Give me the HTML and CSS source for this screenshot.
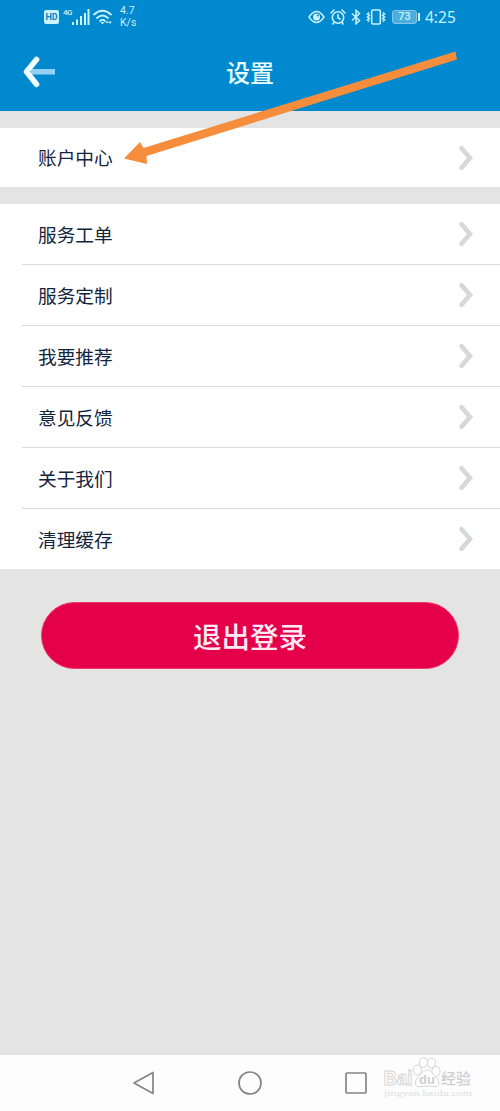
FILE: index.html
```html
<!DOCTYPE html>
<html lang="zh-CN">
<head>
<meta charset="utf-8">
<title>设置</title>
<link rel="stylesheet" href="styles.css">
</head>
<body>
<svg class="defs" width="0" height="0"><defs><symbol id="chevron" viewBox="0 0 17 26"><path d="M3.500 3.300 12 13 3.500 22.700" fill="none" stroke="#d5d8dc" stroke-width="4.600" stroke-linecap="round" stroke-linejoin="miter"/></symbol></defs></svg>
<div class="phone">
  <header class="header">
    <div class="status">
      <div class="status-left">
        <span class="hd">HD</span>
        <span class="network">4G</span>
        <svg class="signal" width="18" height="16" viewBox="0 0 18 16" fill="#c9f2fa"><path d="M0 13h2v3H0zM4 10.500h2V16H4zM8 7h2v9H8zM12 4h2v12h-2zM15.500 0h2v16h-2z"/></svg>
        <svg class="wifi" width="20" height="16" viewBox="0 0 20 16"><g fill="none" stroke="#c9f2fa" stroke-width="1.8" stroke-linecap="round"><path d="M1 5.500Q9.500-2 18 5.500M4 9Q9.500 4 15 9M7 12q2.500-2.200 5 0"/></g><path d="M7.500 13h4l-2 2.500zM12.500 14l1.600-2.300 1.600 2.300zM15.500 12.500h3.200L17.100 15z" fill="#c9f2fa"/></svg>
        <div class="speed"><span>4.7</span><span>K/s</span></div>
      </div>
      <div class="status-right">
        <svg width="17" height="14" viewBox="0 0 17 14"><path d="M1 7Q8.500-4 16 7 8.500 18 1 7Z" fill="none" stroke="#c9f2fa" stroke-width="1.500"/><circle cx="8.500" cy="7" r="3.500" fill="#c9f2fa"/><circle cx="9.800" cy="5.600" r="1" fill="#0787cd"/></svg>
        <svg class="alarm" width="16" height="16" viewBox="0 0 16 16" fill="none" stroke="#c9f2fa" stroke-width="1.600" stroke-linecap="round"><circle cx="8" cy="8.500" r="5.700"/><path d="M1 4 4 1M15 4l-3-3M8 5.500v3.200l2 1.300M4 13.300l-1 1.700M12 13.300l1 1.700"/></svg>
        <svg class="bluetooth" width="10" height="16" viewBox="0 0 10 16" fill="none" stroke="#c9f2fa" stroke-width="1.500"><path d="M1 4.500 8.500 11.500 5 14.700V1.300L8.500 4.500 1 11.500"/></svg>
        <svg class="vibrate" width="20" height="16" viewBox="0 0 20 16" fill="none" stroke="#c9f2fa" stroke-width="1.600"><rect x="5.700" y="1" width="8.600" height="14" rx="1"/><path d="M3.300 3.500 1.500 5l1.800 1.500L1.500 8l1.800 1.500L1.500 11l1.800 1.500M16.700 3.500 18.500 5l-1.800 1.500L18.500 8l-1.800 1.500 1.800 1.500-1.800 1.500"/></svg>
        <span class="battery">73</span><span class="battery-tip"></span>
        <span class="time">4:25</span>
      </div>
    </div>
    <div class="titlebar">
      <svg class="back" width="34" height="32" viewBox="0 0 34 32"><path d="M9 13h24v5.500H9z" fill="#93d0f4"/><path d="M14.500 3.500 4.500 15.700l10 12.500" fill="none" stroke="#f4ffff" stroke-width="5.600" stroke-linecap="round" stroke-linejoin="round"/></svg>
      <h1 class="title">设置</h1>
      <span class="title-spacer"></span>
    </div>
  </header>
  <main class="content">
    <section class="group account"><div class="row"><span class="label">账户中心</span><svg class="chevron"><use href="#chevron"/></svg></div></section>
    <section class="group services">
      <div class="row"><span class="label">服务工单</span><svg class="chevron"><use href="#chevron"/></svg></div>
      <div class="row"><span class="label">服务定制</span><svg class="chevron"><use href="#chevron"/></svg></div>
      <div class="row"><span class="label">我要推荐</span><svg class="chevron"><use href="#chevron"/></svg></div>
      <div class="row"><span class="label">意见反馈</span><svg class="chevron"><use href="#chevron"/></svg></div>
      <div class="row"><span class="label">关于我们</span><svg class="chevron"><use href="#chevron"/></svg></div>
      <div class="row"><span class="label">清理缓存</span><svg class="chevron"><use href="#chevron"/></svg></div>
    </section>
    <button class="logout">退出登录</button>
  </main>
  <nav class="nav">
    <svg width="24" height="26" viewBox="0 0 24 26"><path d="M21 2.500v21L2 13Z" fill="none" stroke="#858585" stroke-width="1.700" stroke-linejoin="round"/></svg>
    <svg width="26" height="26" viewBox="0 0 26 26"><circle cx="13" cy="13" r="11" fill="none" stroke="#858585" stroke-width="1.700"/></svg>
    <svg width="24" height="24" viewBox="0 0 24 24"><rect x="2" y="2" width="20" height="20" rx="1" fill="none" stroke="#858585" stroke-width="1.700"/></svg>
  </nav>
  <svg class="annotation" width="340" height="120" viewBox="0 0 340 120"><path d="M335.500 1.500 337 9.500 26.500 106 27 114 4 108.500 20 92 23.500 98Z" fill="#f58d3d"/></svg>
  <svg class="watermark" width="100" height="46" viewBox="0 0 100 46">
    <g fill="#fff" stroke="#d5d5d5" stroke-width="1">
      <ellipse cx="36.500" cy="14" rx="4" ry="5"/><ellipse cx="42.500" cy="6.500" rx="4" ry="5"/><ellipse cx="50.500" cy="7" rx="4" ry="5"/><ellipse cx="55" cy="15.500" rx="4" ry="5"/>
      <path d="M46 14c-4 0-5 4-9 7-5 6-2 11 3 9.500q6-1 12 0c6 1.500 8-4.500 3-9.500-4-3-5-7-9-7Z"/>
      <text class="wm-brand" x="2.500" y="29" textLength="29" lengthAdjust="spacingAndGlyphs">Bai</text>
      <text class="wm-du" x="38" y="28">du</text>
      <text class="wm-cn" x="60" y="28" textLength="30">经验</text>
    </g>
    <text class="wm-url" x="3" y="40" textLength="88" lengthAdjust="spacingAndGlyphs">jingyan.baidu.com</text>
  </svg>
</div>
</body>
</html>
```

FILE: styles.css
```css
* { box-sizing: border-box; }
body { margin: 0; font-family: "Noto Sans CJK SC", sans-serif; }
.defs { position: absolute; }
.phone { position: relative; width: 500px; height: 1111px; display: flex; flex-direction: column; overflow: hidden; background: #e4e4e4; }
.header { height: 111px; flex: none; background: #0089ce; color: #e8ffff; }
.status { height: 34px; display: flex; justify-content: space-between; padding: 0 44px; font-family: Roboto, sans-serif; color: #c9f2fa; }
.status-left, .status-right { display: flex; align-items: center; }
.status svg { display: block; flex: none; }
.hd { width: 15px; height: 14px; border-radius: 2px; background: #c9f2fa; color: #0787cd; font-size: 9px; line-height: 14px; font-weight: 700; text-align: center; }
.network { width: 10px; margin: -9px 0 0 4px; font-size: 8px; line-height: 8px; font-weight: 500; letter-spacing: -0.5px; }
.signal { margin-left: -1px; }
.wifi { margin-left: 3px; }
.speed { display: flex; flex-direction: column; margin-left: 7px; font-size: 10.5px; line-height: 12px; }
.alarm { margin-left: 5px; }
.bluetooth { margin-left: 5px; }
.vibrate { margin-left: 5px; }
.battery { width: 25px; height: 14px; margin-left: 6px; border: 1px solid #82c7ea; border-radius: 3px; background: #4badde; font-size: 11px; line-height: 12px; font-weight: 500; text-align: center; }
.battery-tip { width: 2px; height: 8px; margin-left: 1px; background: #c9f2fa; }
.time { width: 31px; margin-left: 5px; font-family: "Noto Sans", sans-serif; font-size: 15.5px; line-height: 20px; white-space: nowrap; }
.titlebar { height: 77px; display: flex; align-items: center; justify-content: space-between; padding: 0 22px; }
.back { margin-top: -1px; }
.title { margin: -1px 0 0; font-size: 24px; line-height: 36px; font-weight: 500; }
.title-spacer { width: 34px; }
.content { flex: 1; padding-top: 17px; }
.group { background: #fff; padding-left: 22px; color: #13253c; }
.account .row { height: 59px; }
.services { margin-top: 17px; }
.row { height: 61px; display: flex; align-items: center; justify-content: space-between; padding: 0 25px 0 16px; font-size: 18.7px; line-height: 28px; }
.row + .row { border-top: 1px solid #dcdcdc; }
.services .row:first-child { height: 60px; }
.label { padding-bottom: 1px; }
.chevron { width: 17px; height: 26px; display: block; }
.logout { display: block; width: 418px; height: 67px; margin: 33px 0 0 41px; padding: 0; border: 1px solid #ec3868; border-radius: 34px; background: #e4004b; color: #ffeaf4; font-family: inherit; font-size: 28.5px; line-height: 42px; font-weight: 500; }
.nav { height: 56px; display: flex; flex: none; align-items: center; justify-content: space-between; padding: 0 132px; background: #fdfdfd; }
.annotation { position: absolute; left: 120px; top: 50px; }
.watermark { position: absolute; left: 381px; top: 1056px; }
.wm-brand { font: 700 21px "Liberation Sans", sans-serif; }
.wm-du { font: 700 13px "Liberation Sans", sans-serif; stroke: none; fill: #cecece; }
.wm-cn { font: 500 15px "Noto Sans CJK SC", sans-serif; stroke: none; fill: #cecece; }
.wm-url { font: 9px "Liberation Serif", serif; fill: #dedede; }
```
